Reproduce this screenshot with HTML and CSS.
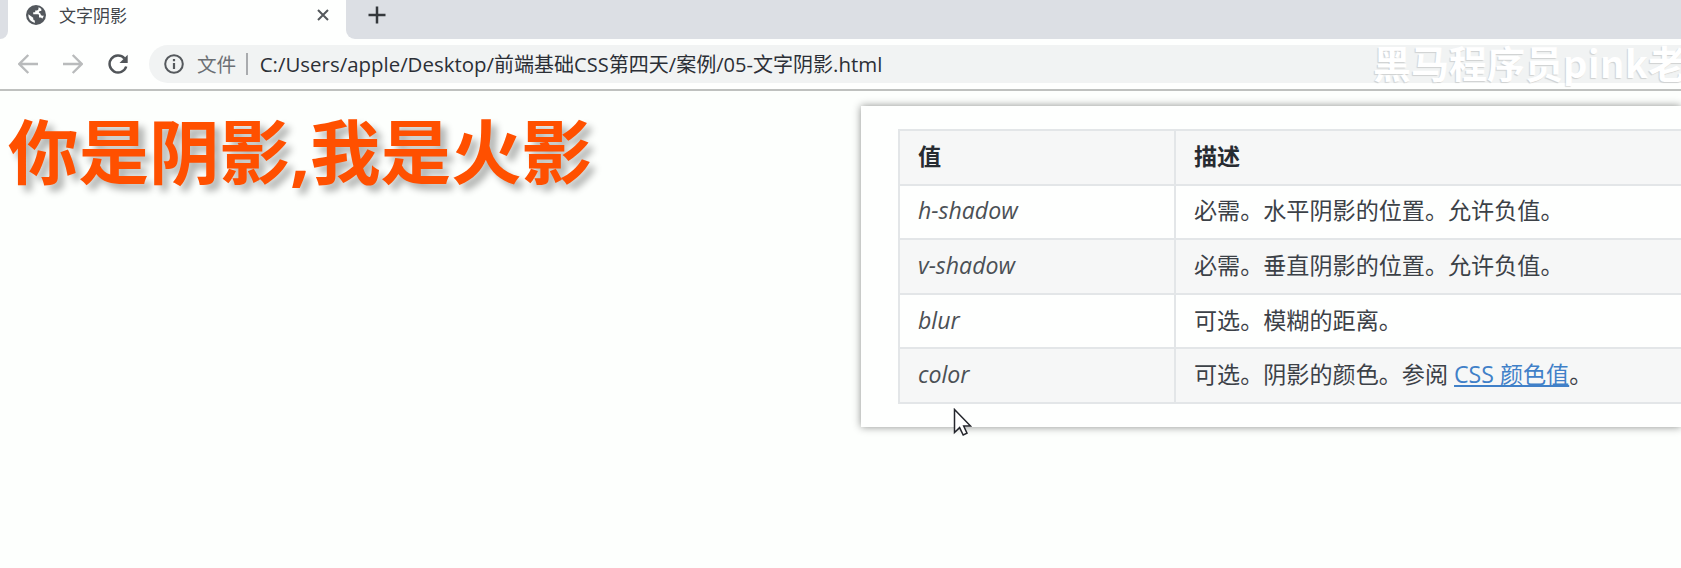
FILE: index.html
```html
<!DOCTYPE html>
<html lang="zh-CN">
<head>
<meta charset="utf-8">
<title>文字阴影</title>
<link rel="stylesheet" href="styles.css">
</head>
<body>
<header class="browser">
  <div class="tabs">
    <div class="tab-edge tab-edge-left"></div>
    <div class="tab">
      <svg class="globe" viewBox="0 0 20 20"><circle cx="10" cy="10" r="10" fill="#53585d"/><path d="M12.5 2.3V3.8Q12.5 5.3 10.7 5.4H9.2V7.3H7.2V9.3H12Q13 9.3 13 10.4V12.5H14.2Q15.7 12.5 16.2 13.8 17.3 12.3 17.8 10.6 15.5 11.2 14.8 9.8 14.6 7.8 12.8 7.6 12.7 6.1 14.2 6.1H15.3V4Q14.2 2.8 12.5 2.3ZM2.3 9.2Q2 15.8 8.8 17.9V15.6Q7.2 15.4 7.2 13.8V12.8Z" fill="#fefffe"/></svg>
      <span class="tab-title">文字阴影</span>
      <svg class="close" viewBox="0 0 12 12"><path d="M1 1 11 11M11 1 1 11" fill="none" stroke="#54585c" stroke-width="2"/></svg>
    </div>
    <div class="tab-strip"><svg class="plus" viewBox="0 0 18 18"><path d="M9 .5V17.5M.5 9H17.5" stroke="#34383c" stroke-width="2.5"/></svg></div>
  </div>
  <div class="toolbar">
    <svg class="nav" viewBox="0 0 20 20"><path d="M20 10H1.5M10.3 1 1.3 10 10.3 19" fill="none" stroke="#b9bbbc" stroke-width="2.4"/></svg>
    <svg class="nav forward" viewBox="0 0 20 20"><path d="M0 10H18.5M9.7 1 18.7 10 9.7 19" fill="none" stroke="#b9bbbc" stroke-width="2.4"/></svg>
    <svg class="nav reload" viewBox="0 0 20 20"><path d="M18.2 12.5A8.5 8.5 0 1 1 16.4 4.3" fill="none" stroke="#515559" stroke-width="2.5"/><path d="M19.7 .8V9H11.5Z" fill="#515559"/></svg>
    <div class="address">
      <svg class="nav info" viewBox="0 0 20 20"><circle cx="10" cy="10" r="8.8" fill="none" stroke="#55595d" stroke-width="2"/><path d="M10 9V15M10 5V7.2" stroke="#55595d" stroke-width="2.2"/></svg>
      <span class="scheme">文件</span>
      <span class="divider"></span>
      <span class="url"><span class="path">C:/Users/apple/Desktop/</span><span class="name">前端基础CSS第四天/案例/05-文字阴影</span><span class="ext">.html</span></span>
    </div>
  </div>
</header>
<main class="page">
  <h1 class="headline">你是阴影,我是火影</h1>
  <section class="panel">
    <table class="values">
      <thead><tr><th class="key">值</th><th>描述</th></tr></thead>
      <tbody>
        <tr><td><em>h-shadow</em></td><td>必需。水平阴影的位置。允许负值。</td></tr>
        <tr><td><em>v-shadow</em></td><td>必需。垂直阴影的位置。允许负值。</td></tr>
        <tr><td><em>blur</em></td><td>可选。模糊的距离。</td></tr>
        <tr><td><em>color</em></td><td>可选。阴影的颜色。参阅 <a class="link">CSS 颜色值</a>。</td></tr>
      </tbody>
    </table>
  </section>
</main>
<div class="watermark">黑马程序员<span class="latin">pink</span>老</div>
<svg class="cursor" viewBox="0 0 19 28"><path d="M1.5 1.5V24.5L6.6 19.6 10.2 27 14 25.2 10.7 18H17.5Z" fill="#fff" stroke="#24262c" stroke-width="1.5"/></svg>
</body>
</html>
```
FILE: styles.css
```css
* { box-sizing: border-box; }
body {
  margin: 0;
  position: relative;
  width: 1681px;
  height: 568px;
  overflow: hidden;
  background: #fdfffd;
  font-family: "Open Sans", "Noto Sans CJK SC", sans-serif;
}
svg { display: block; flex: none; }
.browser { height: 91px; border-bottom: 2px solid #bfc1bf; background: #fefffe; }
.tabs { display: flex; height: 39px; }
.tab-edge { width: 8px; background: #dcdfe4; border-bottom-right-radius: 8px; }
.tab { display: flex; width: 338px; height: 30px; padding: 0 17px 0 18px; align-items: center; }
.globe { width: 20px; height: 20px; }
.tab-title { margin-left: 13px; font: 17px/28px "Noto Sans CJK SC", sans-serif; color: #41454a; }
.close { width: 12px; height: 12px; margin-left: auto; }
.tab-strip { flex: 1; background: #dcdfe4; border-bottom-left-radius: 9px; padding: 6px 0 0 22px; }
.plus { width: 18px; height: 18px; }
.toolbar { display: flex; height: 50px; align-items: center; padding-left: 18px; }
.nav { width: 20px; height: 20px; }
.forward { margin-left: 25px; }
.reload { margin-left: 25px; }
.address {
  display: flex;
  align-items: center;
  flex: 1;
  height: 38px;
  margin-left: 21px;
  padding-left: 15px;
  border-radius: 19px 0 0 19px;
  background: #f1f3f3;
}
.scheme { margin-left: 13px; font: 19.6px/36px "Noto Sans CJK SC", sans-serif; color: #6b6f74; }
.divider { width: 1.5px; height: 22px; margin: 0 12px 0 10px; background: #a9abae; }
.url { font-size: 20.45px; line-height: 36px; color: #2b2f36; white-space: nowrap; }
.name { font-size: 20.05px; }
.page { display: flex; align-items: flex-start; justify-content: space-between; height: 477px; }
.headline {
  margin: 11px 0 0 8px;
  font-size: 70.5px;
  line-height: 100px;
  font-weight: 700;
  color: #ff5000;
  white-space: nowrap;
  text-shadow: 6px 6px 7px rgba(0, 0, 0, .3);
}
.panel {
  width: 820px;
  height: 321px;
  margin-top: 15px;
  padding: 23px 0 0 37px;
  background: #fefffe;
  box-shadow: 0 0 8px rgba(0, 0, 0, .45);
}
.values {
  width: 830px;
  height: 275px;
  table-layout: fixed;
  border-collapse: collapse;
  font-size: 23.1px;
  color: #3c4147;
}
.values th, .values td {
  height: 54.6px;
  padding: 0 18px 3px;
  border: 2px solid #e3e6e8;
  line-height: 36px;
  text-align: left;
  white-space: nowrap;
}
.values th { color: #272b31; background: #f6f7f7; }
.values .key { width: 276px; }
.values tbody tr:nth-child(even) { background: #f6f7f7; }
.values em { color: #4b5055; }
.link { color: #4080c8; text-decoration: underline; }
.watermark {
  position: absolute;
  left: 1373px;
  top: 35px;
  font: 700 38px/54px "Noto Sans CJK SC", sans-serif;
  white-space: nowrap;
  color: #fff;
  text-shadow: -1px 1px 1px rgba(0, 0, 0, .14);
}
.latin { letter-spacing: .5px; }
.cursor { position: absolute; left: 953px; top: 408px; width: 19px; height: 28px; }
```
